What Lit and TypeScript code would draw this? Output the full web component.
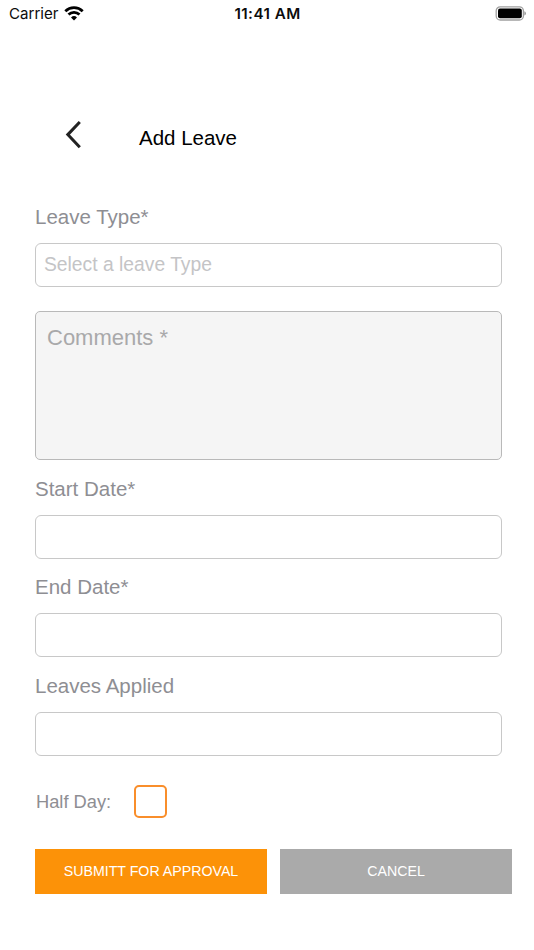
import { LitElement, html, css } from "lit";
import { customElement, property } from "lit/decorators.js";

@customElement("status-bar")
class StatusBar extends LitElement {
  static styles = css`
    :host {
      display: grid;
      grid-template-columns: 1fr auto 1fr;
      align-items: center;
      height: 28px;
      padding: 0 8px 0 9px;
      box-sizing: border-box;
      font: 400 15.1px/28px Inter, sans-serif;
      color: #0c0c0c;
    }
    .carrier {
      display: flex;
      align-items: center;
      gap: 6px;
    }
    .time {
      font-weight: 600;
      font-size: 15.2px;
      letter-spacing: 0.45px;
    }
    svg {
      display: block;
    }
    .wifi {
      margin-top: -2px;
    }
    .battery {
      justify-self: end;
      margin-top: -2px;
    }
  `;
  render() {
    return html`
      <div class="carrier">
        <span>Carrier</span>
        <svg class="wifi" width="20" height="15" viewBox="0 0 20 15">
          <g fill="none" stroke="#000" stroke-width="2.8">
            <path d="M1.3 5.2A12.6 12.6 0 0 1 18.7 5.2" />
            <path d="M4.5 8.6A8 8 0 0 1 15.5 8.6" />
          </g>
          <path d="M10 14.4L7 11.5A4.4 4.4 0 0 1 13 11.5Z" />
        </svg>
      </div>
      <span class="time">11:41 AM</span>
      <svg class="battery" width="31" height="15" viewBox="0 0 31 15">
        <rect x="1.2" y="0.8" width="27.2" height="13.2" rx="4" fill="none" stroke="#a0a0a0" stroke-width="1.3" />
        <rect x="3" y="2.5" width="23.8" height="9.8" rx="2" />
        <path d="M29.4 5.2Q30.9 5.8 30.9 7.4T29.4 9.6Z" fill="#929292" />
      </svg>
    `;
  }
}

@customElement("form-field")
class FormField extends LitElement {
  @property() label = "";
  @property() placeholder = "";
  static styles = css`
    :host {
      display: block;
    }
    .label {
      height: 24px;
      line-height: 24px;
      font-size: 20.5px;
      color: #8e8e93;
      white-space: nowrap;
    }
    .box {
      box-sizing: border-box;
      height: 44px;
      margin-top: 14px;
      padding-left: 8px;
      border: 1px solid #c8c8c8;
      border-radius: 6px;
      font-size: 19.3px;
      line-height: 41px;
      color: #c4c4c6;
    }
  `;
  render() {
    return html`
      <div class="label">${this.label}</div>
      <div class="box">${this.placeholder}</div>
    `;
  }
}

@customElement("app-root")
class AppRoot extends LitElement {
  static styles = css`
    :host {
      display: flex;
      flex-direction: column;
      height: 950px;
      background: #fff;
      font-family: "Liberation Sans", Arial, sans-serif;
      overflow: hidden;
    }
    header {
      display: flex;
      align-items: flex-start;
      margin-top: 92px;
      padding-left: 65px;
      height: 85px;
    }
    .back {
      display: block;
    }
    h1 {
      margin: 6px 0 0 56px;
      font-size: 20.5px;
      font-weight: 400;
      line-height: 24px;
      color: #000;
    }
    main {
      display: flex;
      flex-direction: column;
      padding: 0 32.5px 0 35px;
    }
    .comments {
      box-sizing: border-box;
      height: 149px;
      margin: 24px 0 17px;
      padding: 13px 11px;
      border: 1px solid #b9b9b9;
      border-radius: 5px;
      background: #f5f5f5;
      font-size: 22px;
      line-height: 26px;
      color: #a9a9aa;
    }
    .end {
      margin-top: 16px;
    }
    .applied {
      margin-top: 17px;
    }
    .half {
      display: flex;
      align-items: center;
      margin: 29px 0 0 1px;
      height: 33px;
      font-size: 18.3px;
      color: #8e8e93;
    }
    .check {
      box-sizing: border-box;
      width: 33px;
      height: 33px;
      margin-left: 23.2px;
      border: 2px solid #f98e2b;
      border-radius: 5px;
    }
    .actions {
      display: grid;
      grid-template-columns: 232px 232px;
      gap: 13px;
      margin: 31px 0 0 35px;
    }
    button {
      height: 45px;
      padding: 0;
      border: 0;
      border-radius: 0;
      font: 400 14.2px/45px "Liberation Sans", Arial, sans-serif;
      color: #fff;
      background: #aaa;
    }
    .submit {
      background: #fc9208;
    }
  `;
  render() {
    return html`
      <status-bar></status-bar>
      <header>
        <svg class="back" width="18" height="30" viewBox="0 0 18 30">
          <path d="M14.8 2L2.8 14.6L14.8 27.2" fill="none" stroke="#222" stroke-width="3" />
        </svg>
        <h1>Add Leave</h1>
      </header>
      <main>
        <form-field label="Leave Type*" placeholder="Select a leave Type"></form-field>
        <div class="comments">Comments *</div>
        <form-field label="Start Date*"></form-field>
        <form-field class="end" label="End Date*"></form-field>
        <form-field class="applied" label="Leaves Applied"></form-field>
        <div class="half">
          <span>Half Day:</span>
          <span class="check"></span>
        </div>
      </main>
      <div class="actions">
        <button class="submit">SUBMITT FOR APPROVAL</button>
        <button>CANCEL</button>
      </div>
    `;
  }
}
